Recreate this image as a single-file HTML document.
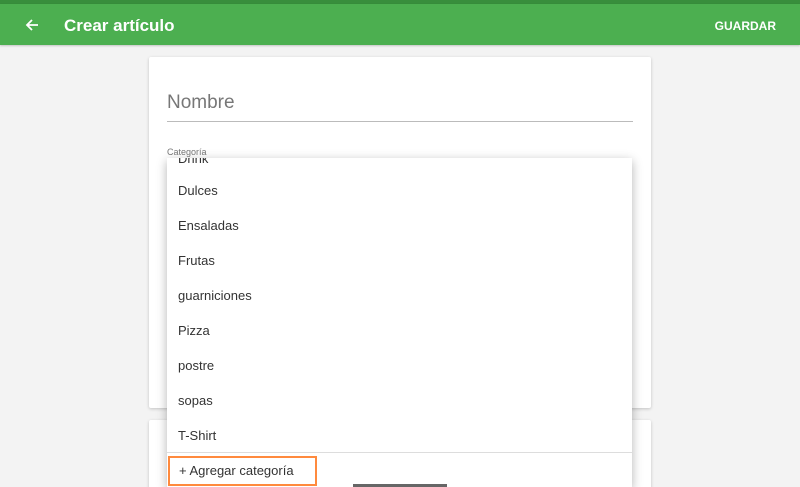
<!DOCTYPE html>
<html style="width:800px;height:487px;overflow:hidden"><head><meta charset="utf-8"><style>
*{margin:0;padding:0;box-sizing:border-box}
body{width:800px;height:487px;overflow:hidden;background:#f3f3f3;font-family:"Liberation Sans",Roboto,sans-serif;position:relative}
.status{position:absolute;left:0;top:0;width:800px;height:4px;background:#388e3c}
.bar{position:absolute;left:0;top:4px;width:800px;height:41px;background:#4caf50;box-shadow:0 1px 2px rgba(0,0,0,.2)}
.title{position:absolute;left:64px;top:12px;color:#fff;font-size:17px;font-weight:bold}
.save{position:absolute;right:24px;top:15px;color:#fff;font-size:12px;font-weight:bold}
.back{position:absolute;left:25px;top:14px}
.card{position:absolute;background:#fff;box-shadow:0 1px 3px rgba(0,0,0,.2);border-radius:2px}
.nombre{position:absolute;left:167px;top:92px;font-size:19px;color:#777}
.line{position:absolute;left:167px;top:121px;width:466px;height:1px;background:#bbb}
.cat{position:absolute;left:167px;top:147px;font-size:9px;color:#777}
.dd{position:absolute;left:167px;top:158px;width:465px;height:329px;background:#fff;box-shadow:0 3px 10px rgba(0,0,0,.3);overflow:hidden}
.it{position:absolute;left:11px;font-size:13px;color:#333}
.div{position:absolute;left:0;top:294px;width:465px;height:1px;background:#ddd}
.add{position:absolute;left:1px;top:298px;width:149px;height:30px;border:2px solid #ff8a3d}
.add span{position:absolute;left:9px;top:5px;font-size:13px;color:#333}
.hb{position:absolute;left:353px;top:484px;width:94px;height:3px;background:#666}
</style></head><body>
<div class="status"></div>
<div class="bar">
<svg class="back" width="14" height="14" viewBox="0 0 14 14"><path d="M13 7H2M7 2L2 7l5 5" stroke="#fff" stroke-width="1.8" fill="none"/></svg>
<div class="title">Crear artículo</div>
<div class="save">GUARDAR</div>
</div>
<div class="card" style="left:149px;top:57px;width:502px;height:351px"></div>
<div class="card" style="left:149px;top:420px;width:502px;height:80px"></div>
<div class="nombre">Nombre</div>
<div class="line"></div>
<div class="cat">Categoría</div>
<div class="dd">
<div class="it" style="top:-7px">Drink</div>
<div class="it" style="top:25px">Dulces</div>
<div class="it" style="top:60px">Ensaladas</div>
<div class="it" style="top:95px">Frutas</div>
<div class="it" style="top:130px">guarniciones</div>
<div class="it" style="top:165px">Pizza</div>
<div class="it" style="top:200px">postre</div>
<div class="it" style="top:235px">sopas</div>
<div class="it" style="top:270px">T-Shirt</div>
<div class="div"></div>
<div class="add"><span>+ Agregar categoría</span></div>
</div>
<div class="hb"></div>
</body></html>
